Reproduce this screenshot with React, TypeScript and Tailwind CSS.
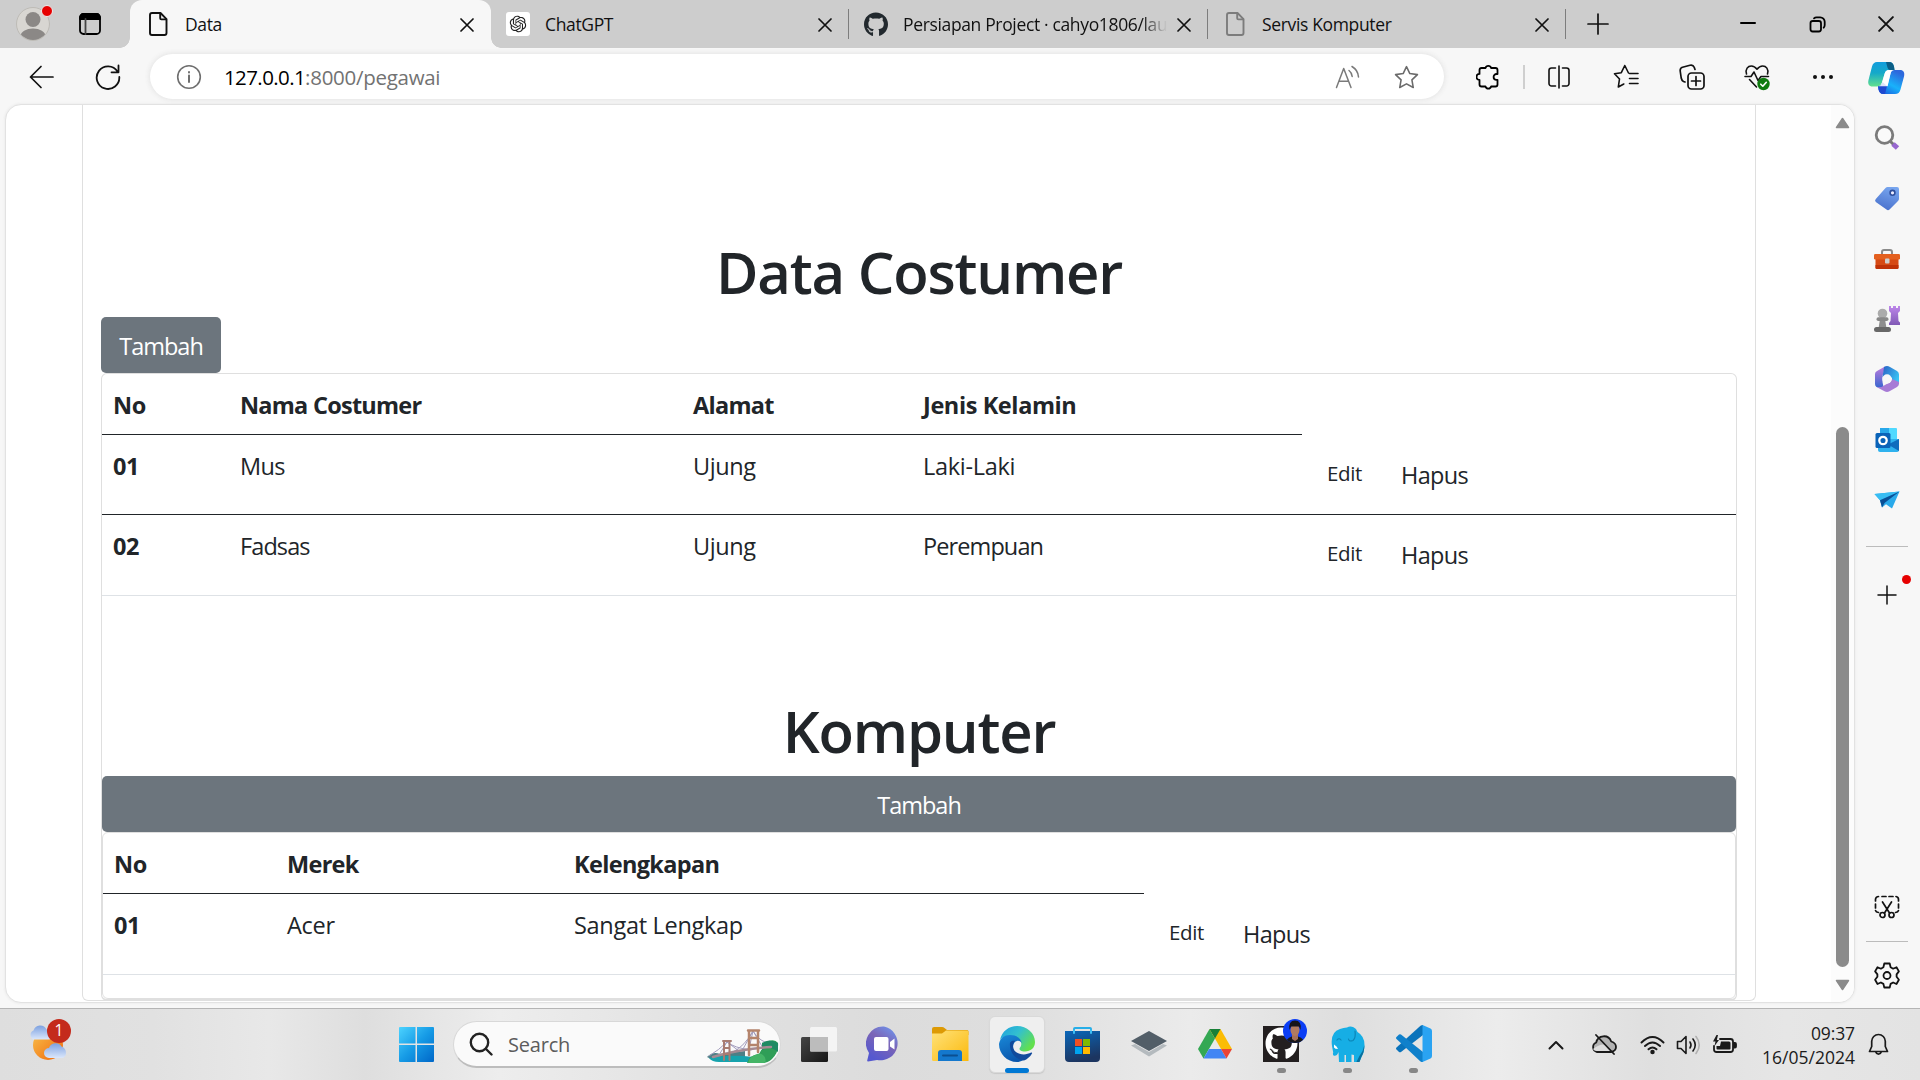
import React from "react";
import type { ReactNode } from "react";
import { FaGithub } from "react-icons/fa";
import { RiOpenaiFill } from "react-icons/ri";

type IconProps = { w: number; h: number; box?: string; sw?: number; color?: string; className?: string; children: ReactNode };

function Ico({ w, h, box, sw = 1.5, color = "#1a1a1a", className = "", children }: IconProps) {
  return (
    <svg
      width={w}
      height={h}
      viewBox={box ?? `0 0 ${w} ${h}`}
      fill="none"
      stroke={color}
      strokeWidth={sw}
      strokeLinecap="round"
      strokeLinejoin="round"
      className={`block shrink-0 ${className}`}
    >
      {children}
    </svg>
  );
}

const PageIcon = ({ color }: { color: string }) => (
  <Ico w={20} h={26} color={color} sw={1.9}>
    <path d="M4 2h8.500l6 6.200V22a2 2 0 0 1-2 2H4a2 2 0 0 1-2-2V4a2 2 0 0 1 2-2Z" />
    <path d="M12.200 2.400v4.800a1.200 1.200 0 0 0 1.200 1.200h4.800" />
  </Ico>
);

const Cross = ({ size = 14, sw = 1.7 }: { size?: number; sw?: number }) => (
  <Ico w={size} h={size} box="0 0 14 14" sw={sw} color="#111">
    <path d="M1 1l12 12M13 1L1 13" />
  </Ico>
);

/* ---------- tab strip ---------- */

type TabProps = { width: string; icon: ReactNode; title: string; active?: boolean; fade?: boolean; divider?: boolean };

function Tab({ width, icon, title, active = false, fade = false, divider = false }: TabProps) {
  return (
    <div className={`${width} relative flex h-12 shrink-0 items-center ${active ? "rounded-t-[12px] bg-[#f7f7f7]" : ""}`}>
      {active && (
        <>
          <div className="absolute bottom-0 -left-2.5 size-2.5 bg-[radial-gradient(circle_at_0_0,#cdcdcd_9.500px,#f7f7f7_10px)]" />
          <div className="absolute -right-2.5 bottom-0 size-2.5 bg-[radial-gradient(circle_at_100%_0,#cdcdcd_9.500px,#f7f7f7_10px)]" />
        </>
      )}
      <div className={`${active ? "ml-4" : "ml-[15px]"} flex w-6 shrink-0 justify-center`}>{icon}</div>
      <div
        className={`ml-[15px] flex-1 overflow-hidden text-[17.5px] leading-6 tracking-[-0.35px] whitespace-nowrap text-[#111] ${
          fade ? "[mask-image:linear-gradient(to_right,#000_238px,transparent_264px)]" : ""
        }`}
      >
        {title}
      </div>
      <div className={`${active ? "mr-[17px]" : "mr-[15.5px]"} ml-1 shrink-0 pt-px`}>
        <Cross />
      </div>
      {divider && <div className="h-[30px] w-[1.5px] bg-[#7d7d7d]" />}
    </div>
  );
}

function TabStrip() {
  return (
    <div className="flex h-12 items-center bg-[#cdcdcd]">
      <div className="relative ml-4 size-[34px] shrink-0">
        <Ico w={34} h={34} sw={0}>
          <circle cx="17" cy="17" r="16.500" fill="#d8d6d2" stroke="#bdbbb6" strokeWidth="1" />
          <clipPath id="avatar"><circle cx="17" cy="17" r="16" /></clipPath>
          <g clipPath="url(#avatar)" fill="#8b8886">
            <circle cx="17" cy="12.500" r="7.500" />
            <ellipse cx="17" cy="29.500" rx="12.500" ry="8" />
          </g>
        </Ico>
        <div className="absolute -top-[2px] right-[-3px] size-[12px] rounded-full border border-[#ececec] bg-[#e60000]" />
      </div>
      <Ico w={22} h={22} color="#000" sw={1.8} className="ml-[29px]">
        <rect x="1" y="1" width="20" height="20" rx="3.500" />
        <path d="M1 4.500A3.500 3.500 0 0 1 4.500 1h13A3.500 3.500 0 0 1 21 4.500V6H1Z" fill="#000" />
        <path d="M6.500 6v15" stroke="#444" />
      </Ico>
      <div className="w-[29px]" />
      <Tab width="w-[361px]" active icon={<PageIcon color="#111" />} title="Data" />
      <Tab
        width="w-[358px]"
        divider
        icon={
          <div className="flex size-6 items-center justify-center rounded-[3px] bg-white">
            <RiOpenaiFill size={20} color="#222" />
          </div>
        }
        title="ChatGPT"
      />
      <Tab width="w-[359px]" divider fade icon={<FaGithub size={25} color="#22292e" />} title="Persiapan Project · cahyo1806/lau" />
      <Tab width="w-[358px]" divider icon={<PageIcon color="#7c7c7c" />} title="Servis Komputer" />
      <Ico w={22} h={22} sw={1.7} className="ml-[21px]" color="#111">
        <path d="M11 1v20M1 11h20" />
      </Ico>
      <div className="flex-1" />
      <Ico w={16} h={4} sw={2} color="#000" className="mr-[53px]">
        <path d="M1 1h14" />
      </Ico>
      <Ico w={17} h={17} sw={1.8} color="#000" className="mr-[52px]">
        <rect x="1.500" y="5" width="10.500" height="10.500" rx="2.200" />
        <path d="M5 2.300C5.800 1.500 6.500 1.300 7.500 1.300h3.700a4.500 4.500 0 0 1 4.500 4.500V9c0 1.200-.3 2-1 2.700" />
      </Ico>
      <div className="mr-[26px]">
        <Cross size={16} sw={1.7} />
      </div>
    </div>
  );
}

/* ---------- toolbar ---------- */

const STAR = "M12 1.500l3.200 6.700 7.300 1-5.300 5.100 1.300 7.300L12 18.100l-6.500 3.500 1.300-7.300L1.500 9.200l7.300-1Z";

function Toolbar() {
  return (
    <div className="flex h-14 items-center bg-[#f7f7f7] pt-px">
      <Ico w={26} h={24} color="#111" sw={1.7} className="ml-[29px]">
        <path d="M24 12H1.500M12 1.500L1.500 12 12 22.500" />
      </Ico>
      <Ico w={26} h={26} color="#111" sw={1.8} className="ml-10">
        <path d="M22.500 7.500A11.300 11.300 0 1 0 24.300 13M23.500 1.500v6.800h-7" />
      </Ico>
      <div className="ml-[29px] flex h-[45px] w-[1294px] shrink-0 items-center rounded-full bg-white shadow-[0_0_5px_1px_#e4e4e4]">
        <Ico w={26} h={26} color="#6f6f6f" sw={1.6} className="ml-[26px]">
          <circle cx="13" cy="13" r="11.300" />
          <path d="M13 11.500v6.500M13 8v.4" strokeWidth="2" />
        </Ico>
        <div className="ml-[22px] flex-1 text-[20.5px] leading-7 text-[#727272]">
          <span className="tracking-[-0.6px] text-black">127.0.0.1</span>
          <span className="tracking-[-0.28px]">:8000/pegawai</span>
        </div>
        <Ico w={26} h={24} color="#7a7a7a" sw={1.5} className="mr-[33px]">
          <path d="M1.500 22.500L8.700 3.500 16 22.500M4 16.300h9.500" />
          <path d="M14 5.500c1.900 1.500 3 3.400 3.200 6M17 1.500c4 2.400 6.300 6 6.500 10.500" />
        </Ico>
        <Ico w={25} h={24} box="0 0 24 23" color="#6b6b6b" sw={1.5} className="mr-[25px]">
          <path d={STAR} />
        </Ico>
      </div>
      <div className="flex flex-1 items-center">
        <Ico w={24} h={26} color="#000" sw={1.8} className="ml-[32px]">
          <path d="M5.500 4h4a2.900 2.900 0 0 1 5.600 0h4.400q2 0 2 2v4h-1a2.900 2.900 0 0 0 0 5.800h1v4.700q0 2-2 2h-4.400a2.900 2.900 0 0 1-5.600 0h-4q-2 0-2-2v-4.600a3 3 0 0 1 0-6V6q0-2 2-2Z" />
        </Ico>
        <div className="ml-[23px] h-6 w-[1.5px] bg-[#cfcfcf]" />
        <Ico w={24} h={24} color="#111" sw={1.6} className="ml-[22px]">
          <path d="M8.500 3H4.500A2.500 2.500 0 0 0 2 5.500v13A2.500 2.500 0 0 0 4.500 21h4M15.500 3h4A2.500 2.500 0 0 1 22 5.500v13a2.500 2.500 0 0 1-2.500 2.500h-4M12 1v22" />
        </Ico>
        <Ico w={26} h={25} color="#111" sw={1.6} className="ml-[42px]">
          <path d="M15.500 9L11.800 1.500 8.300 8.700 1.500 9.800l5 5.200-1.200 8 5.500-3M16.500 9.500H25M16.500 14.500H25M16.500 19.500H25" />
        </Ico>
        <Ico w={26} h={26} color="#111" sw={1.7} className="ml-[40px]">
          <rect x="9" y="9" width="16" height="16" rx="3.500" />
          <path d="M17 12.500v9M12.500 17h9M6 18l-1.500-.5C3 16.800 2.500 15.500 2.200 14L1.200 7C1 5 1.800 3.800 3.500 3.300L11 1.200c2-.5 3.500.3 4.200 2l.8 2.300" />
        </Ico>
        <Ico w={28} h={28} color="#111" sw={1.6} className="ml-[39px] mt-0.5">
          <path d="M2.500 10C1 5 4 2 7.300 2c2.500 0 4 1 5.700 3.200C14.700 3 16.200 2 18.700 2 22 2 25 5 23.500 10M5.500 15.500L12.500 23M1 12.500h6l3-4.500 4 8.500 3-4h7.500" />
          <circle cx="19.500" cy="20" r="6.200" fill="#107c10" stroke="none" />
          <path d="M16.800 20.200l2 2 3.500-3.900" stroke="#fff" />
        </Ico>
        <Ico w={22} h={6} sw={0} className="ml-[40px]">
          <g fill="#111"><circle cx="3" cy="3" r="2" /><circle cx="11" cy="3" r="2" /><circle cx="19" cy="3" r="2" /></g>
        </Ico>
        <Ico w={38} h={34} sw={0} className="ml-[33px] mt-0.5">
          <defs>
            <linearGradient id="cpA" x1="0" y1="0" x2="0" y2="1"><stop offset="0" stopColor="#129ddd" /><stop offset=".45" stopColor="#15a9c9" /><stop offset="1" stopColor="#62e08e" /></linearGradient>
            <linearGradient id="cpB" x1="0" y1="1" x2=".6" y2="0"><stop offset="0" stopColor="#1b4fd8" /><stop offset=".5" stopColor="#18b2fb" /><stop offset="1" stopColor="#2d68dc" /></linearGradient>
          </defs>
          <path d="M10 1h12c3 0 4.500 2 5 4.500L27.500 9H22c-2.500 0-3.600 1.200-4.300 3.500L15 21.500c-.8 2.500-2.500 4-5 4H5.500C2 25.500.5 23 1.500 19L5 5.500C5.800 2.500 7.500 1 10 1Z" fill="url(#cpA)" />
          <path d="M19 1h3c3 0 4.500 2 5 4.500L27.500 9H23C20.500 9 20 4 19 1Z" fill="#0b5e86" />
          <path d="M28 33H16.500c-3 0-4.400-1.800-5-4.500l-.5-3.200c2.500-.2 4-1.600 4.700-4L19 25h1.500l3-12.500C24 10 25 9 27.500 9H33c3.500 0 5 2.500 4 6.500L33.500 28.500C32.700 31.500 31 33 28 33Z" fill="url(#cpB)" />
          <path d="M11 25.300c2.500-.2 4-1.600 4.700-4L20 25l-2 8h-1.500c-3 0-4.400-1.800-5-4.500Z" fill="#1f49d0" />
          <path d="M17.700 12.500Q18.500 9 22 9h5q-2.500 0-3.400 3.500L20.500 25.300H11q3-.3 4-3.800Z" fill="#fff" fillOpacity=".85" />
        </Ico>
      </div>
    </div>
  );
}

/* ---------- page content ---------- */

type Cell = [text: string, tracking: string];
type Row = { cells: Cell[]; dark?: boolean };

function Actions() {
  return (
    <div className="flex pl-[25px]">
      <span className="w-[74px] pt-5 text-[20.5px] tracking-[-0.35px]">Edit</span>
      <span className="pt-[22px] tracking-[-0.65px]">Hapus</span>
    </div>
  );
}

function DataTable({ cols, heads, rows }: { cols: string; heads: Cell[]; rows: Row[] }) {
  return (
    <div className="text-[23.5px] leading-9 text-[#212529]">
      <div className={`grid h-[61px] ${cols}`}>
        {heads.map(([text, tracking]) => (
          <div key={text} className={`border-b border-[#212529] pt-[13px] pl-[11px] font-bold ${tracking}`}>{text}</div>
        ))}
      </div>
      {rows.map((r, i) => (
        <div key={i} className={`grid border-b ${r.dark ? "h-20 border-[#212529]" : "h-[81px] border-[#dee2e6]"} ${cols}`}>
          {r.cells.map(([text, tracking], j) => (
            <div key={j} className={`pt-[13px] pl-[11px] ${tracking} ${j === 0 ? "font-bold" : ""}`}>{text}</div>
          ))}
          <Actions />
        </div>
      ))}
    </div>
  );
}

const Heading = ({ children }: { children: string }) => (
  <h1 className="mb-[9px] h-[72px] text-center text-[58px] leading-[71px] font-semibold tracking-[-1.2px] text-[#212529]">{children}</h1>
);

const AddButton = ({ wide }: { wide?: boolean }) => (
  <button
    className={`flex h-14 items-center justify-center rounded-[5px] bg-[#6c757d] pt-[2px] text-[23.5px] leading-9 tracking-[-1px] text-white ${wide ? "w-full" : "w-[120px]"}`}
  >
    Tambah
  </button>
);

function PageContent() {
  return (
    <div className="flex h-[899px] w-[1850px] shrink-0 overflow-hidden rounded-[16px] border border-[#e2e2e2] bg-white shadow-[0_0_3px_#e4e4e4]">
      <div className="ml-[76px] h-[896px] w-[1674px] rounded-b-[6px] border border-t-0 border-[#dfdfdf] px-[18px] pt-[131px]">
        <Heading>Data Costumer</Heading>
        <AddButton />
        <div className="h-[628px] rounded-[6px] border border-[#dfdfdf] border-b-2">
          <DataTable
            cols="grid-cols-[127px_453px_230px_390px_1fr]"
            heads={[
              ["No", "tracking-[-0.4px]"],
              ["Nama Costumer", "tracking-[-0.75px]"],
              ["Alamat", "tracking-[-0.7px]"],
              ["Jenis Kelamin", "tracking-[-0.4px]"],
            ]}
            rows={[
              { cells: [["01", "tracking-[-0.5px]"], ["Mus", "tracking-[-0.6px]"], ["Ujung", "tracking-[-0.4px]"], ["Laki-Laki", "tracking-[-0.3px]"]], dark: true },
              { cells: [["02", "tracking-[-0.5px]"], ["Fadsas", "tracking-[-0.9px]"], ["Ujung", "tracking-[-0.4px]"], ["Perempuan", "tracking-[-0.9px]"]] },
            ]}
          />
          <div className="h-[99px]" />
          <Heading>Komputer</Heading>
          <AddButton wide />
          <div className="h-[167px] rounded-[6px] border border-[#dfdfdf]">
            <DataTable
              cols="grid-cols-[173px_287px_581px_1fr]"
              heads={[
                ["No", "tracking-[-0.4px]"],
                ["Merek", "tracking-[-0.7px]"],
                ["Kelengkapan", "tracking-[-0.65px]"],
              ]}
              rows={[{ cells: [["01", "tracking-[-0.5px]"], ["Acer", "tracking-[-0.3px]"], ["Sangat Lengkap", "tracking-[-0.3px]"]] }]}
            />
          </div>
        </div>
      </div>
      <div className="ml-auto flex w-[23px] flex-col items-center bg-[#fcfcfc] pt-3">
        <Ico w={15} h={12} sw={1.5} color="#8b8b8b"><path d="M7.500 1.500L13.500 10.500H1.500Z" fill="#8b8b8b" /></Ico>
        <div className="mt-[298px] h-[540px] w-[13px] rounded-full bg-[#8b8b8b]" />
        <Ico w={15} h={12} sw={1.5} color="#8b8b8b" className="mt-3"><path d="M7.500 10.500L13.500 1.500H1.500Z" fill="#8b8b8b" /></Ico>
      </div>
    </div>
  );
}

/* ---------- sidebar ---------- */

function Sidebar() {
  const apps: ReactNode[] = [
    <Ico w={28} h={28} sw={0}>
      <path d="M18 18l4 4" stroke="#777" strokeWidth="3" />
      <path d="M20 20l4.500 4" stroke="#9767cf" strokeWidth="5" strokeLinecap="butt" />
      <circle cx="11.500" cy="11" r="8.300" stroke="#7b7b7b" strokeWidth="2.800" fill="#fafafa" />
    </Ico>,
    <Ico w={28} h={28} sw={0}>
      <linearGradient id="tag" x1=".7" y1="0" x2=".4" y2="1"><stop stopColor="#78a6ef" /><stop offset="1" stopColor="#4a72cd" /></linearGradient>
      <path d="M14.500 3H24q2 0 2 2v9.500q0 1.500-1 2.500l-8.500 8.500q-1.500 1.500-3 0L2.800 18q-1.500-1.700 0-3L12.500 4q1-1 2-1Z" fill="url(#tag)" />
      <circle cx="19.500" cy="8.800" r="2.400" fill="#eef" stroke="#2f4f9c" strokeWidth="1.600" />
    </Ico>,
    <Ico w={28} h={28} sw={0}>
      <path d="M9 9V7q0-2 2-2h6q2 0 2 2v2" stroke="#8a8a8a" strokeWidth="2" />
      <rect x="2.500" y="13" width="23" height="11" rx="1.500" fill="#d64a15" />
      <path d="M2.500 20h23v2.500q0 1.500-1.500 1.500H4q-1.500 0-1.500-1.500Z" fill="#bf3208" />
      <rect x="1" y="9" width="26" height="5.500" rx="1.200" fill="#e4601f" />
      <rect x="12" y="13.500" width="4.500" height="5" rx="1" fill="#cfcfcf" />
    </Ico>,
    <Ico w={28} h={30} sw={0}>
      <linearGradient id="rook" x1="0" y1="0" x2="0" y2="1"><stop stopColor="#bd86ea" /><stop offset="1" stopColor="#8059b5" /></linearGradient>
      <path d="M16 2h2v2h2V2h3v2h2V2h2v5l-2 2 .5 8 1.500 1.500V21H16v-2l1.500-2L18 9l-2-2Z" fill="url(#rook)" />
      <circle cx="9.500" cy="9.500" r="4.800" fill="#ababab" />
      <path d="M7 15h5l1.500 9.500h-8Z" fill="#8e8e8e" />
      <rect x="3.500" y="13.300" width="12" height="3.700" rx="1.800" fill="#888" />
      <rect x="1" y="23" width="17" height="5" rx="2.500" fill="#686868" />
    </Ico>,
    <Ico w={28} h={28} sw={0}>
      <linearGradient id="m3" x1="0" y1="0" x2="0" y2="1"><stop stopColor="#bf7cdd" /><stop offset="1" stopColor="#3565cf" /></linearGradient>
      <linearGradient id="m3b" x1="0" y1="0" x2="1" y2=".6"><stop stopColor="#2b5fc4" /><stop offset="1" stopColor="#38c4f4" /></linearGradient>
      <path d="M12 1.500L4 6Q2 7 2 9v10q0 2 1.500 3l3 1q2 .5 4-1l-1-5V11Z" fill="url(#m3)" />
      <path d="M11 2q3-2 6 0l7 4q2 1.300 2 3.500v10l-7-4.500v-2l-5-3-4.500 2Z" fill="url(#m3b)" />
      <path d="M26 17v1.500q0 2-2 3.500l-7.500 4.300q-2.500 1.400-5 0L4 22.300l4.500-.3 9.500-5.500 1-2.500Z" fill="#a77bd6" />
      <circle cx="14" cy="14" r="4.700" fill="#f7f7f7" />
    </Ico>,
    <Ico w={28} h={28} sw={0}>
      <rect x="7" y="2" width="17" height="14" rx="1" fill="#50d9ff" />
      <rect x="7" y="2" width="9" height="7" fill="#28a8ea" />
      <path d="M5 13h21v11q0 2-2 2H7q-2 0-2-2Z" fill="#2fb2ee" />
      <path d="M26 13v12L15 18.500Z" fill="#0f6cbd" />
      <rect x="2.500" y="7" width="15" height="15" rx="1.500" fill="#0a63b8" />
      <circle cx="10" cy="14.500" r="3.700" stroke="#fff" strokeWidth="2.300" />
    </Ico>,
    <Ico w={28} h={28} sw={0}>
      <path d="M1.500 8L26.500 5.500 19 22.500l-6-4.300L9 21.500l-2-7.300Z" fill="#29a9ea" />
      <path d="M1.500 8L26.500 5.500 7 14.200Z" fill="#38bdf3" />
      <path d="M7 14.200L26.500 5.500 11.500 17 9 21.500Z" fill="#0a4f96" />
    </Ico>,
  ];
  return (
    <div className="flex h-[904px] w-[64px] shrink-0 flex-col items-center">
      <div className="flex flex-col items-center pt-1">
        {apps.map((a, i) => (
          <div key={i} className="flex h-[60.3px] items-center justify-center">{a}</div>
        ))}
      </div>
      <div className="mt-[16px] h-px w-[42px] bg-[#bcbcbc]" />
      <div className="relative mt-[38px]">
        <Ico w={20} h={20} sw={1.5} color="#111"><path d="M10 1v18M1 10h18" /></Ico>
        <div className="absolute -top-[10px] left-[25px] size-[9px] rounded-full bg-[#e60000]" />
      </div>
      <div className="flex-1" />
      <Ico w={26} h={24} sw={1.7} color="#111">
        <path d="M1.500 6V4.500A3 3 0 0 1 4.500 1.500M8 1.500h4M15 1.500h4M22 1.500a3 3 0 0 1 2.500 3V6M1.500 9v4M24.500 9v4M1.500 15.500q.5 1.700 3 2M24.500 15.500q-.5 1.700-3 2M8.500 7l7 11M17.500 7L10.500 18" />
        <circle cx="8.500" cy="20" r="2.500" /><circle cx="17.500" cy="20" r="2.500" />
      </Ico>
      <div className="mt-[22px] h-px w-[42px] bg-[#bcbcbc]" />
      <Ico w={26} h={27} sw={1.8} color="#111" className="mt-5 mb-[19px]">
        <path d="M10.300 1.500h5.400l.9 3.800 2.500 1.400 3.400-1.500 2.400 4.200-2.300 3v2.400l2.300 3-2.400 4.200-3.400-1.500-2.500 1.400-.9 3.600h-5.400l-.9-3.600-2.500-1.400L3.500 22 1.100 17.800l2.300-3v-2.400l-2.300-3 2.400-4.200 3.400 1.500 2.500-1.400Z" />
        <circle cx="13" cy="13.500" r="3.500" />
      </Ico>
    </div>
  );
}

/* ---------- taskbar ---------- */

function TaskIcon({ children, active = false, dot = false }: { children: ReactNode; active?: boolean; dot?: boolean }) {
  return (
    <div
      className={`relative flex h-[57px] w-[56px] shrink-0 items-center justify-center rounded-[6px] pb-[2px] ${
        active ? "border border-[#d9d9d9] bg-[#efefef] shadow-[0_1px_1px_#c8c8c8]" : ""
      }`}
    >
      {children}
      {active && <div className="absolute -bottom-px h-[5px] w-6 rounded-full bg-[#0078d4]" />}
      {dot && <div className="absolute bottom-0 h-[5px] w-[9px] rounded-full bg-[#878787]" />}
    </div>
  );
}

function SearchPill() {
  return (
    <div className="ml-[19px] flex h-[47px] w-[328px] shrink-0 items-center overflow-hidden rounded-full border-[1.5px] border-b-2 border-[#d8d8d8] border-b-[#bdbdbd] bg-[#fafafa]">
      <Ico w={24} h={24} sw={2.4} color="#222" className="ml-[15px]">
        <circle cx="10.500" cy="10.500" r="8.700" />
        <path d="M17 17l5.500 5.500" />
      </Ico>
      <span className="ml-[15px] flex-1 pt-px text-[20px] leading-7 tracking-[-0.2px] text-[#5c5c5c]">Search</span>
      <Ico w={74} h={36} sw={1} className="mr-px mt-1">
        <path d="M2 29q6-6 13-3l25-3v8H6Z" fill="#4d7f86" stroke="none" />
        <path d="M4 30q20-4 45-1v5H14q-7 0-10-4Z" fill="#17a3ad" stroke="none" />
        <path d="M22 14Q14 22 4 28M22 14q7 6 24 8M48 3Q40 18 28 24M48 3q6 11 20 14M22 14l-8 13M22 14l12 9M48 3l-10 18M48 3l10 17M48 3l-4 18" stroke="#a29cbc" strokeWidth="1" />
        <path d="M42 35q2-8 12-9 2-5 6-7-2-4 4-6 6-2 9 2 1 9-6 16-4 4-10 4Z" fill="#2f9e57" stroke="none" />
        <path d="M57 15q7-5 16 0v9q-8-7-16-2Z" fill="#1f8a63" stroke="none" />
        <path d="M50 27q5-3 8 0 4 3 2 8H43q1-6 7-8Z" fill="#45b567" stroke="none" />
        <path d="M8 29Q35 21 66 19" stroke="#a58a93" strokeWidth="2.500" />
        <path d="M19 32V13M24.500 32V13M18 13h8M19 20h5M19 26h5" stroke="#a97c72" strokeWidth="2" />
        <path d="M44 27V3M53 24V3M43 2.500h11M44 10h9M44 17h8" stroke="#b4846c" strokeWidth="2.500" />
      </Ico>
    </div>
  );
}

function Taskbar() {
  return (
    <div className="flex h-[72px] shrink-0 items-center border-t border-[#b5b5b5] bg-[linear-gradient(90deg,#dedede_0%,#e1e1e1_8%,#e8e8e8_14%,#dedede_19%,#ededed_26%,#e2e2e2_36%,#dcdcdc_46%,#dedede_53%,#ebebeb_62%,#dedede_70%,#ececec_78%,#dfdfdf_86%,#e6e6e6_93%,#e3e3e3_100%)]">
      <div className="relative ml-[29px] h-[42px] w-[42px]">
        <Ico w={42} h={42} sw={0} className="-mt-1">
          <defs>
            <linearGradient id="sun" x1="0" y1="0" x2="1" y2="1"><stop stopColor="#f8c14c" /><stop offset="1" stopColor="#f0660a" /></linearGradient>
            <linearGradient id="cloud" x1="0" y1="0" x2="0" y2="1"><stop stopColor="#7da1e0" /><stop offset="1" stopColor="#dbe7fb" /></linearGradient>
          </defs>
          <circle cx="19" cy="25" r="15" fill="url(#sun)" />
          <path d="M5 19.500a4.800 4.800 0 0 1-.5-9 7 7 0 0 1 13-1q6 1 6 6 0 4-4 4Z" fill="url(#cloud)" />
          <path d="M20 38a5 5 0 0 1 0-10 7 7 0 0 1 12.500-1.500Q37 28 37 33q0 5-5 5Z" fill="url(#cloud)" />
        </Ico>
        <div className="absolute top-[-5px] left-[18px] flex size-6 items-center justify-center rounded-full bg-[#c42b1c] text-[15.5px] leading-none text-white">1</div>
      </div>
      <Ico w={35} h={35} sw={0} className="ml-[328px]">
        <linearGradient id="win" x1="0" y1="0" x2="35" y2="35" gradientUnits="userSpaceOnUse"><stop stopColor="#4cd3ff" /><stop offset=".5" stopColor="#169be6" /><stop offset="1" stopColor="#0067c8" /></linearGradient>
        <path d="M1 0h15.500v16.500H0V1Q0 0 1 0ZM18 0h16q1 0 1 1v15.500H18ZM0 18h16.500v17H1q-1 0-1-1ZM18 18h17v16q0 1-1 1H18Z" fill="url(#win)" />
      </Ico>
      <SearchPill />
      <div className="ml-[9px] flex gap-[10.2px]">
        <TaskIcon>
          <Ico w={38} h={36} sw={0}>
            <linearGradient id="tv" x1="0" y1="0" x2="1" y2="1"><stop stopColor="#454545" /><stop offset="1" stopColor="#161616" /></linearGradient>
            <rect x="2" y="11" width="27" height="25" rx="1.500" fill="url(#tv)" />
            <rect x="11" y="1" width="27" height="24.500" rx="1.500" fill="#f5f5f5" fillOpacity=".93" />
            <path d="M11 11h18v14.500H12q-1 0-1-1Z" fill="#bcbcbc" />
          </Ico>
        </TaskIcon>
        <TaskIcon>
          <Ico w={36} h={36} sw={0}>
            <linearGradient id="chat" x1="1" y1="0" x2=".4" y2="1"><stop stopColor="#6d9bf5" /><stop offset=".5" stopColor="#7b65b6" /><stop offset="1" stopColor="#5558cf" /></linearGradient>
            <path d="M18 0.500a17 17 0 1 1-7 33.500L2 35.500q-1 0-.8-1L3 27A17 17 0 0 1 18 .5Z" fill="url(#chat)" />
            <rect x="8" y="11" width="14.500" height="14" rx="2" fill="#fff" />
            <path d="M24 16l4.500-3.500v11L24 20.500Z" fill="#fff" />
          </Ico>
        </TaskIcon>
        <TaskIcon>
          <Ico w={37} h={36} sw={0}>
            <linearGradient id="fold" x1="0" y1="0" x2="1" y2="1"><stop stopColor="#ffe27a" /><stop offset="1" stopColor="#fbb90c" /></linearGradient>
            <path d="M0 3q0-2 2-2h8q1.500 0 2.500 1l2.500 2H35q1.500 0 1.500 1.500V9H0Z" fill="#dd9a05" />
            <path d="M0 7.500h10l4-3h21q1.500 0 1.500 1.500v29H1.500Q0 35 0 33.500Z" fill="url(#fold)" />
            <path d="M6 35V27q0-3 3-3h18q3 0 3 3v8Z" fill="#1478cd" />
            <path d="M11 29.500h14" stroke="#0b4f91" strokeWidth="2" />
          </Ico>
        </TaskIcon>
        <TaskIcon active>
          <Ico w={36} h={36} sw={0}>
            <defs>
              <linearGradient id="eg1" x1="0" y1="0" x2="1" y2=".6"><stop stopColor="#1d9fe0" /><stop offset=".5" stopColor="#33c0cf" /><stop offset="1" stopColor="#63e04c" /></linearGradient>
              <linearGradient id="eg2" x1="0" y1="0" x2=".4" y2="1"><stop stopColor="#1989d8" /><stop offset="1" stopColor="#0b56ac" /></linearGradient>
            </defs>
            <path d="M1 14C3 5 10 0 18 0c10 0 18 7 18 16 0 6-4.500 9.500-10 9.500-4 0-5.500-1.500-5.500-2.700 0-1 1.800-1.800 1.800-5C22.300 13 17 10 11 10 6.500 10 3 11.500 1 14Z" fill="url(#eg1)" />
            <path d="M0 18C1 12 5.500 9 11 9c7 0 11.500 4 11.500 8-1-1.500-2.500-2.500-4.500-2-2 .4-4 2.500-4 6 0 7 8 11.500 15 8.500-3 4-7 6.500-11 6.500C8 36 0 28 0 18Z" fill="url(#eg2)" />
            <path d="M11 17c-1 9 6 17 14 17.500 3-1.200 6-3.500 8-7 .4-.7-.2-1.200-.8-.9C25 30.500 14 28 14 20c0-2.500 1-4 2.500-5.200C14 14.500 11.500 15 11 17Z" fill="#114a9c" />
          </Ico>
        </TaskIcon>
        <TaskIcon>
          <Ico w={35} h={36} sw={0}>
            <linearGradient id="store" x1="0" y1="0" x2=".3" y2="1"><stop stopColor="#0a67b9" /><stop offset="1" stopColor="#1c3560" /></linearGradient>
            <path d="M9 7V3q0-1 1-1h15q1 0 1 1v4" stroke="#27aee8" strokeWidth="2" />
            <path d="M0 5h35v27q0 4-4 4H4q-4 0-4-4Z" fill="url(#store)" />
            <path d="M9 7V4.500M26 7V4.500" stroke="#3fc0f5" strokeWidth="2" />
            <path d="M10 13h7v7h-7Z" fill="#f25022" /><path d="M18 13h7v7h-7Z" fill="#7fba00" /><path d="M10 21h7v7h-7Z" fill="#00a4ef" /><path d="M18 21h7v7h-7Z" fill="#ffb900" />
          </Ico>
        </TaskIcon>
        <TaskIcon>
          <Ico w={36} h={28} sw={0}>
            <path d="M0 15.500L4 14l14 8 14-8 4 1.500L18 26.500Z" fill="#b4babe" />
            <path d="M18 1l18 10L18 21 0 11Z" fill="#525e68" />
          </Ico>
        </TaskIcon>
        <TaskIcon>
          <Ico w={34} h={30} sw={0}>
            <path d="M11.500 0L17 9.500 5.500 29.500 0 20Z" fill="#34a853" />
            <path d="M22.500 0L34 20H23L11.500 0Z" fill="#fbbc04" />
            <path d="M11.500 0h11L17 9.500Z" fill="#188038" />
            <path d="M11 20h12l5.500 9.500h-23Z" fill="#4285f4" />
            <path d="M23 20h11l-5.500 9.500Z" fill="#ea4335" />
          </Ico>
        </TaskIcon>
        <TaskIcon dot>
          <div className="relative flex size-9 items-center justify-center bg-[#231f20]">
            <FaGithub size={33} color="#fff" />
            <Ico w={24} h={24} sw={0} className="absolute -top-[7px] left-5">
              <clipPath id="face"><circle cx="12" cy="12" r="12" /></clipPath>
              <g clipPath="url(#face)">
                <rect width="24" height="24" fill="#0a3df5" />
                <path d="M2 24q3-7 10-7t10 7Z" fill="#18181c" />
                <path d="M9 14h6v6l-3 2-3-2Z" fill="#a4705a" />
                <ellipse cx="12" cy="11" rx="4.500" ry="6" fill="#b07a60" />
                <path d="M6.500 11Q5 1.500 12 1.500T17.500 11L16 7.500H8Z" fill="#15141a" />
              </g>
            </Ico>
          </div>
        </TaskIcon>
        <TaskIcon dot>
          <Ico w={36} h={36} sw={0}>
            <path d="M17 1.500q3-2 6.500-.3 3 1.300 4 4.800 7 4 7 13 0 7-3 12l-2 5h-5.500v-7l-2.500-.5V36h-5.500v-7h-1.500v7H9l-.5-10q-2 5-5 3.500-1-.8-.3-3L2 20Q0 6 10 3q3.500-1.500 7-1.500Z" fill="#16aee5" />
            <path d="M34.400 19q0 7-3 12l-2 5h-3l3-6q4-5 5-11Z" fill="#0b6f9c" />
            <path d="M25 5q1 7-2 9.500-4 1.500-4.500-1.500M7 14q2-2.500 4 0" stroke="#0b86b8" strokeWidth="1.200" />
            <path d="M4 18.500q3 1.500 4 4.500-3 0-4-1.500Z" fill="#fff" />
          </Ico>
        </TaskIcon>
        <TaskIcon dot>
          <Ico w={36} h={37} sw={0}>
            <path d="M27 0v10L5 27q-1 .6-2 0L.5 24.500q-1-1 0-2L24.500.7Q25.500 0 27 0Z" fill="#0a73bb" />
            <path d="M27 37V27L5 9.500q-1-.6-2 0L.5 12q-1 1 0 2l24 22.500q1 .8 2.500.5Z" fill="#0f80cb" />
            <path d="M26.500 0L34.500 3.500Q36 4.300 36 6v25q0 1.700-1.500 2.500L26.500 37Z" fill="#2aa3f2" />
          </Ico>
        </TaskIcon>
      </div>
      <div className="flex-1" />
      <Ico w={16} h={10} sw={2} color="#1a1a1a" className="mr-[27px]"><path d="M1.500 8.500L8 2l6.500 6.500" /></Ico>
      <Ico w={26} h={22} sw={1.8} color="#1a1a1a" className="mr-[23px]">
        <path d="M6 18a5 5 0 0 1-.8-9.500 7.800 7.800 0 0 1 15-1Q25 9 25 13t-5 5Z" fill="#b3b3b3" />
        <path d="M2 15q8-6 12-4l5 6H6q-3 0-4-2Z" fill="#dedede" stroke="none" />
        <path d="M5 1l18 19" />
      </Ico>
      <Ico w={25} h={20} sw={1.9} color="#1a1a1a" className="mr-[11px]">
        <path d="M1.500 7.500Q12.500-3.500 23.500 7.500M5 11q7.500-7 15 0M8.500 14.300q4-3.600 8 0" />
        <circle cx="12.500" cy="17" r="1.300" fill="#1a1a1a" />
      </Ico>
      <Ico w={25} h={20} sw={1.6} color="#1a1a1a" className="mr-[11px]">
        <path d="M1.500 6.500H5l5-5v17l-5-5H1.500Z" />
        <path d="M14 7q2 3 0 6M17 4q4.500 6 0 12" /><path d="M20 1.500q6.500 8.500 0 17" stroke="#b0b0b0" />
      </Ico>
      <Ico w={25} h={20} sw={1.8} color="#1a1a1a" className="mr-[25px]">
        <path d="M8 4h10.500Q21 4 21 6.500v8q0 2.500-2.500 2.500h-14Q2 17 2 14.500V11" />
        <path d="M9 6.500h8q1.500 0 1.500 1.500v5.500q0 1-1 1H5.500q-1 0-1-1V11H8Z" fill="#1a1a1a" stroke="none" />
        <path d="M22 8h1q1 0 1 1v2.500q0 1-1 1h-1Z" fill="#1a1a1a" />
        <path d="M4.500 0L1 6.500h2.500L2.500 11l4.500-6H4.800L6 0Z" fill="#1a1a1a" stroke="none" />
      </Ico>
      <div className="mr-[13px] w-[93px] text-right text-[17.5px] leading-6 text-[#1b1b1b]">
        <div className="tracking-[-0.1px]">09:37</div>
        <div className="whitespace-nowrap">16/05/2024</div>
      </div>
      <Ico w={21} h={23} sw={1.7} color="#1a1a1a" className="mr-[31px]">
        <path d="M10.500 1.500a6.800 6.800 0 0 0-6.800 6.800v5.200L1.500 18.500h18l-2.200-5V8.300a6.800 6.800 0 0 0-6.800-6.800ZM7.800 19a2.800 2.800 0 0 0 5.400 0" />
      </Ico>
    </div>
  );
}

export default function App() {
  return (
    <div className="flex h-[1080px] w-[1920px] flex-col overflow-hidden bg-[#f7f7f7] font-['Open_Sans',sans-serif]">
      <TabStrip />
      <Toolbar />
      <div className="flex h-[904px] pl-[5px]">
        <PageContent />
        <Sidebar />
      </div>
      <Taskbar />
    </div>
  );
}
